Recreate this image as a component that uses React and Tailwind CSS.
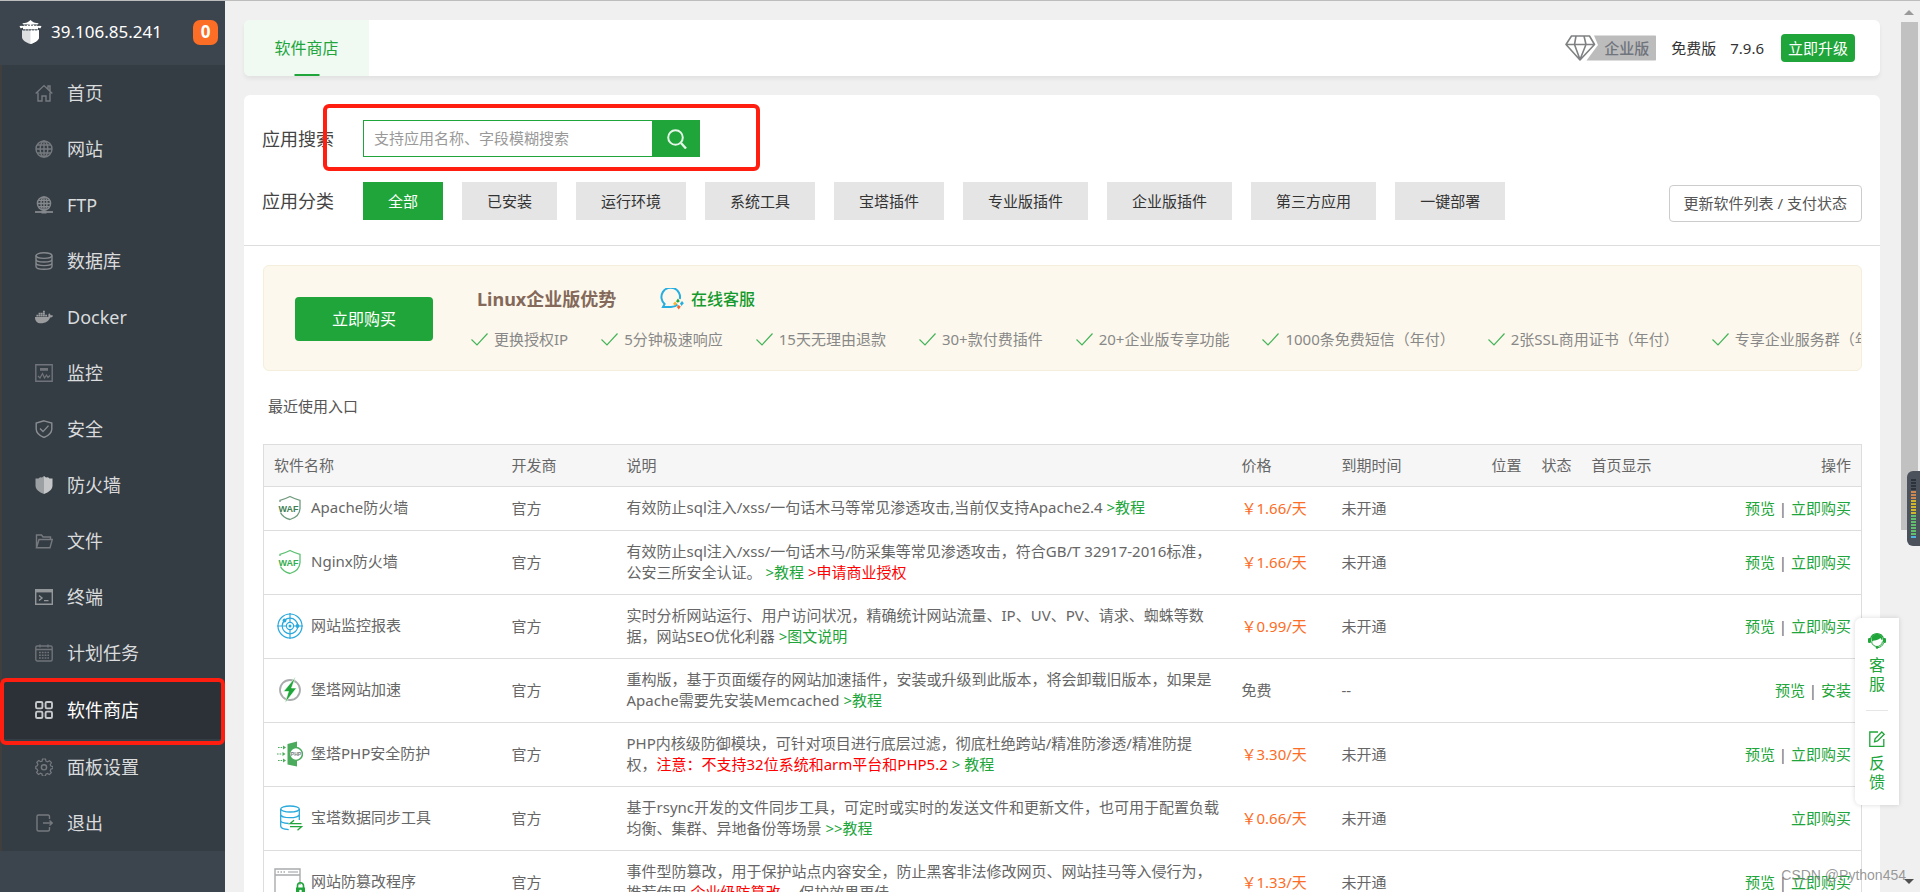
import React from "react";
import { FaDocker } from "react-icons/fa";

const NavIcon = ({ children, className = "text-[#767a7f]" }) => (
  <svg
    viewBox="0 0 18 18"
    className={`size-[18px] shrink-0 ${className}`}
    fill="none"
    stroke="currentColor"
    strokeWidth="1.4"
    aria-hidden="true"
  >
    {children}
  </svg>
);

const globe = (
  <>
    <circle cx="9" cy="9" r="8" />
    <ellipse cx="9" cy="9" rx="3.8" ry="8" />
    <path d="M9 1v16M1 9h16M2.2 5h13.6M2.2 13h13.6" />
  </>
);

const NAV = [
  {
    label: "首页",
    icon: (
      <NavIcon>
        <path d="M.7 9.4 9 1.6l8.3 7.8M3 8.4V17h4v-5h4v5h4V8.4M13 5V2h2v5" />
      </NavIcon>
    ),
  },
  { label: "网站", icon: <NavIcon>{globe}</NavIcon> },
  {
    label: "FTP",
    icon: (
      <NavIcon className="text-[#85888c]">
        <circle cx="9" cy="7.5" r="6.6" />
        <ellipse cx="9" cy="7.5" rx="3" ry="6.6" />
        <path d="M9 1v14M2.4 7.5h13.2M3.4 4.4h11.2M3.4 10.8h11.2" />
        <path d="M0 16h18" strokeWidth="1.8" />
        <path d="M6.5 16h5" strokeWidth="3" />
      </NavIcon>
    ),
  },
  {
    label: "数据库",
    icon: (
      <NavIcon className="text-[#85888c]">
        <ellipse cx="9" cy="3.6" rx="8" ry="2.8" />
        <path d="M1 3.6v10.8c0 1.6 3.6 2.8 8 2.8s8-1.2 8-2.8V3.6M1 7.2C1 8.8 4.6 10 9 10s8-1.2 8-2.8M1 10.8c0 1.6 3.6 2.8 8 2.8s8-1.2 8-2.8" />
      </NavIcon>
    ),
  },
  { label: "Docker", icon: <FaDocker className="size-[18px] shrink-0 text-[#9a9c9e]" aria-hidden="true" /> },
  {
    label: "监控",
    icon: (
      <NavIcon className="text-[#70747a]">
        <path d="M.8.8h16.4v16.4H.8z" />
        <path d="M5 4h8v2.8H5z" fill="currentColor" stroke="none" />
        <path d="m3 12 2 2 2.5-4.5 2 4.5 2-3 1.5 2.5 2-2" strokeWidth="1.2" />
      </NavIcon>
    ),
  },
  {
    label: "安全",
    icon: (
      <NavIcon className="text-[#8a8d91]">
        <path d="M9 .8 16.8 3v6c0 4-3.2 6.6-7.8 8.500C4.400 15.600 1.200 13 1.200 9V3z" />
        <path d="m5 8.600 3 3 5.500-6" />
      </NavIcon>
    ),
  },
  {
    label: "防火墙",
    icon: (
      <NavIcon className="text-[#c4c6c8]">
        <path
          d="m9 0 2 1.500 2-.3 1.500 1.300H17.500V9.500c0 4-3.500 6.500-8.500 8.500z"
          fill="currentColor"
          stroke="none"
        />
        <path d="M9 0 7 1.500l-2-.3-1.500 1.300H.5V9.500c0 4 3.500 6.500 8.500 8.500z" fill="#9da0a3" stroke="none" />
      </NavIcon>
    ),
  },
  {
    label: "文件",
    icon: (
      <NavIcon>
        <path d="M1.500 15.500V3h5l1.500 2h7.500v2.500M1.500 15.800 4 7.500h13.300L15 15.800z" />
      </NavIcon>
    ),
  },
  {
    label: "终端",
    icon: (
      <NavIcon className="text-[#94979a]">
        <path d="M.7 1.700h16.600v14.600H.7z" />
        <path d="M1 3.200h16" strokeWidth="2.400" />
        <path d="m4 7.500 3 2.500-3 2.500M9 12.600h4.500" />
      </NavIcon>
    ),
  },
  {
    label: "计划任务",
    icon: (
      <NavIcon className="text-[#707479]">
        <rect x=".8" y="2" width="16.400" height="15" rx="1.500" />
        <path d="M1 5.500h16M5 .5v3M13 .5v3" />
        <path d="M4 8.500h10M4 11.200h10M4 14h10" strokeDasharray="1.800 1" />
      </NavIcon>
    ),
  },
  {
    label: "软件商店",
    active: true,
    icon: (
      <NavIcon className="text-[#c6c8ca]">
        <g strokeWidth="1.900">
          <rect x="1" y="1" width="6.400" height="6.400" rx="1.300" />
          <rect x="10.600" y="1" width="6.400" height="6.400" rx="1.300" />
          <rect x="1" y="10.600" width="6.400" height="6.400" rx="1.300" />
          <rect x="10.600" y="10.600" width="6.400" height="6.400" rx="1.300" />
        </g>
      </NavIcon>
    ),
  },
  {
    label: "面板设置",
    icon: (
      <NavIcon>
        <path d="M7.500 1h3l.5 2.200 1.500.7 2-1.200 1.900 2-1.200 2 .7 1.400 2 .5v1.900l-2 .6-.7 1.600 1.100 2-1.900 1.900-2-1.200-1.500.7-.5 1.900h-3L7 16l-1.500-.7-2 1.200-1.900-2 1.200-1.900-.7-1.500L.800 10.500v-2l1.400-.6.700-1.600-1.100-2 1.900-1.800 2 1.200L7 3.200z" strokeWidth="1.200" />
        <circle cx="9" cy="9.300" r="2.600" />
      </NavIcon>
    ),
  },
  {
    label: "退出",
    icon: (
      <NavIcon>
        <path d="M14.500 5V2.500c0-1-.5-1.500-1.500-1.500H3.500C2.500 1 2 1.500 2 2.500v13c0 1 .5 1.500 1.500 1.500H13c1 0 1.500-.5 1.500-1.500V13M8 9h9M14.500 6.500 17.200 9l-2.700 2.500" />
      </NavIcon>
    ),
  },
];

const CATEGORIES = ["全部", "已安装", "运行环境", "系统工具", "宝塔插件", "专业版插件", "企业版插件", "第三方应用", "一键部署"];

const BENEFITS = [
  "更换授权IP",
  "5分钟极速响应",
  "15天无理由退款",
  "30+款付费插件",
  "20+企业版专享功能",
  "1000条免费短信（年付）",
  "2张SSL商用证书（年付）",
  "专享企业服务群（年付）",
];

const AppIcon = ({ children, className = "size-[26px]" }) => (
  <svg viewBox="0 0 26 26" className={className} fill="none" aria-hidden="true">
    {children}
  </svg>
);

const Waf = ({ shield, letters }) => (
  <AppIcon>
    <path
      d="M3 7V5.300C7 4.500 10 3 13 1.500c3 1.500 6 3 10 3.800v2.200M3.500 17.500c1.500 3.500 5 5.800 9.500 7 6-1.800 9.800-5.200 10-11V7"
      stroke={shield}
      strokeWidth="1.300"
    />
    <text x="11.500" y="16.500" textAnchor="middle" fontSize="9" fontWeight="700" fill={letters} fontFamily="Liberation Sans, sans-serif">
      WAF
    </text>
  </AppIcon>
);

const Link = ({ children, red }) => (
  <a href="#" className={red ? "text-[#ff0000]" : "text-[#20a53a]"}>
    {children}
  </a>
);

const APPS = [
  {
    name: "Apache防火墙",
    icon: <Waf shield="#6f9a7c" letters="#3f7f52" />,
    desc: (
      <>
        有效防止sql注入/xss/一句话木马等常见渗透攻击,当前仅支持Apache2.4 <Link>&gt;教程</Link>
      </>
    ),
    price: "￥1.66/天",
    expires: "未开通",
    actions: ["预览", "立即购买"],
  },
  {
    name: "Nginx防火墙",
    icon: <Waf shield="#5cc070" letters="#35ad4c" />,
    desc: (
      <>
        有效防止sql注入/xss/一句话木马/防采集等常见渗透攻击，符合GB/T 32917-2016标准，公安三所安全认证。 <Link>&gt;教程</Link>{" "}
        <Link red>&gt;申请商业授权</Link>
      </>
    ),
    price: "￥1.66/天",
    expires: "未开通",
    actions: ["预览", "立即购买"],
  },
  {
    name: "网站监控报表",
    icon: (
      <AppIcon>
        <g stroke="#2aa9dc" strokeWidth="1.200">
          <circle cx="13" cy="13" r="12" />
          <circle cx="13" cy="13" r="7.800" />
          <circle cx="13" cy="13" r="3.600" />
          <path d="M13 0v9.500M13 16.500V26M0 13h9.500M16.500 13H26" />
        </g>
        <circle cx="13" cy="13" r="1.500" fill="#2aa9dc" />
        <circle cx="7.500" cy="7.500" r="1.900" fill="#2aa9dc" />
        <circle cx="20.500" cy="13" r="1.900" fill="#2aa9dc" />
      </AppIcon>
    ),
    desc: (
      <>
        实时分析网站运行、用户访问状况，精确统计网站流量、IP、UV、PV、请求、蜘蛛等数据，网站SEO优化利器 <Link>&gt;图文说明</Link>
      </>
    ),
    price: "￥0.99/天",
    expires: "未开通",
    actions: ["预览", "立即购买"],
  },
  {
    name: "堡塔网站加速",
    icon: (
      <AppIcon>
        <circle cx="13" cy="13" r="10" stroke="#a9abad" strokeWidth="1.800" />
        <path d="M18.500 0 6.500 14.500h5L8 26l11.500-15h-5z" fill="#20a53a" stroke="#fff" strokeWidth=".6" />
      </AppIcon>
    ),
    desc: (
      <>
        重构版，基于页面缓存的网站加速插件，安装或升级到此版本，将会卸载旧版本，如果是Apache需要先安装Memcached <Link>&gt;教程</Link>
      </>
    ),
    price: "免费",
    free: true,
    expires: "--",
    actions: ["预览", "安装"],
  },
  {
    name: "堡塔PHP安全防护",
    icon: (
      <AppIcon>
        <path d="M10.500 3 20 .5V25.500L10.500 23.500z" fill="#4aab5c" />
        <circle cx="19" cy="13" r="6.400" fill="#fff" stroke="#4aab5c" strokeWidth="1.500" />
        <text x="19" y="15" textAnchor="middle" fontSize="5" fontWeight="700" fill="#7a7d80" fontFamily="Liberation Sans, sans-serif">
          PHP
        </text>
        <path d="M1 6.500h5M0 13h5M1 19.500h5" stroke="#4aab5c" strokeWidth="1.200" strokeDasharray="1.600 1" />
        <path d="m6 4.500 3 2-3 2zM5.500 11l3 2-3 2zM6 17.500l3 2-3 2z" fill="#4aab5c" />
      </AppIcon>
    ),
    desc: (
      <>
        PHP内核级防御模块，可针对项目进行底层过滤，彻底杜绝跨站/精准防渗透/精准防提权，
        <span className="text-[#ff0000]">注意：不支持32位系统和arm平台和PHP5.2</span> <Link>&gt; 教程</Link>
      </>
    ),
    price: "￥3.30/天",
    expires: "未开通",
    actions: ["预览", "立即购买"],
  },
  {
    name: "宝塔数据同步工具",
    icon: (
      <AppIcon>
        <g stroke="#2aa9dc" strokeWidth="1.300">
          <ellipse cx="13" cy="4" rx="9.300" ry="3" />
          <path d="M3.700 4v17c0 2 3.500 3.300 8 3.600M22.300 4v11M3.700 9.500c0 1.800 4 3.200 9.300 3.200s9.300-1.400 9.300-3.200M3.700 15.500c0 1.600 3.500 2.800 8 3" />
        </g>
        <path d="M24.500 18.700H13l4-3.500M13 21.700h11.500l-4 3.500" stroke="#20a53a" strokeWidth="1.300" />
      </AppIcon>
    ),
    desc: (
      <>
        基于rsync开发的文件同步工具，可定时或实时的发送文件和更新文件，也可用于配置负载均衡、集群、异地备份等场景 <Link>&gt;&gt;教程</Link>
      </>
    ),
    price: "￥0.66/天",
    expires: "未开通",
    actions: ["立即购买"],
  },
  {
    name: "网站防篡改程序",
    icon: (
      <svg viewBox="0 0 32 28" className="-ml-[3px] h-7 w-8" fill="none" aria-hidden="true">
        <path d="M1 27V1h25v16M1 7h25" stroke="#a9abad" strokeWidth="1.400" />
        <path d="M3.500 4h8" stroke="#a9abad" strokeWidth="1.400" strokeDasharray="1.500 1.500" />
        <path d="M14 4h10" stroke="#a9abad" strokeWidth="1.200" />
        <path d="M23.500 20v-2.200a3 3 0 0 1 6 0V20" stroke="#20a53a" strokeWidth="1.600" />
        <path d="M22 19.500h9V28h-9z" fill="#20a53a" />
        <circle cx="26.500" cy="23" r="1.300" fill="#fff" />
      </svg>
    ),
    desc: (
      <>
        事件型防篡改，用于保护站点内容安全，防止黑客非法修改网页、网站挂马等入侵行为，推荐使用 <Link red>企业级防篡改</Link> ，保护效果更佳
      </>
    ),
    price: "￥1.33/天",
    expires: "未开通",
    actions: ["预览", "立即购买"],
  },
];

function Sidebar() {
  return (
    <aside className="flex w-[225px] shrink-0 flex-col bg-[#3c444d]">
      <header className="flex h-16 items-center pb-[2px] pl-[19px] pr-[7px] text-white">
        <svg viewBox="0 0 23 24" className="h-6 w-[23px]" aria-hidden="true">
          <path d="M11.500 0c1.500 2 5 3.300 8 3.300l-.5 1.200h-15L3.500 3.300c3 0 6.500-1.300 8-3.300z" fill="#fff" />
          <path d="M.5 6c4-.2 8-1 11-2 3 1 7 1.800 11 2l-1 2.200c-1 .1-1.800-.1-2.500-.6v1.900H4V7.600c-.7.500-1.500.7-2.500.6z" fill="#fff" />
          <path d="M3 10.300h17V17c0 3.500-4 5.500-8.500 7C7 22.500 3 20.500 3 17z" fill="#dcdee0" />
          <path d="M11.500 10.300H20V17c0 3.500-4 5.500-8.500 7z" fill="#fff" />
          <path d="M3 5.300h17M4 9.900h15" stroke="#3c444d" strokeWidth=".8" strokeDasharray="2 1" />
        </svg>
        <span className="ml-[9px] text-[17px] leading-6">39.106.85.241</span>
        <span className="ml-auto flex size-[25px] items-center justify-center rounded-[7px] bg-[#fc6d26] text-[17px] font-bold leading-6">
          0
        </span>
      </header>
      <nav className="bg-[#353d44]">
        <ul>
          {NAV.map((item) => (
            <li key={item.label} className="relative">
              <a
                href="#"
                aria-current={item.active ? "page" : undefined}
                className={
                  item.active
                    ? "flex h-[58px] items-center gap-[14px] bg-[#2c3138] pl-[35px] text-lg text-white"
                    : "flex h-14 items-center gap-[14px] border-l-2 border-[#413f3e] pl-[33px] text-lg text-[#d9dbdd]"
                }
              >
                {item.icon}
                <span>{item.label}</span>
              </a>
              {item.active && (
                <span className="pointer-events-none absolute -bottom-[6px] -top-[3px] left-0 right-0 z-10 rounded-md border-4 border-[#ff1e10]" />
              )}
            </li>
          ))}
        </ul>
      </nav>
    </aside>
  );
}

function TopBar() {
  return (
    <div className="flex h-14 items-stretch rounded-md bg-white pr-[25px] shadow-[0_3px_4px_rgba(0,0,0,0.06)]">
      <button className="relative w-[125px] rounded-l-md bg-[#f0f9f2] text-base text-[#20a53a]">
        软件商店
        <span className="absolute bottom-0 left-1/2 h-0.5 w-[25px] -translate-x-1/2 bg-[#20a53a]" />
      </button>
      <div className="ml-auto flex items-center text-[15px] text-[#333]">
        <span className="relative mr-[15px] flex h-[26px] w-[91px] items-center justify-end pr-[7px] font-medium text-[#70747c]">
          <svg viewBox="0 0 91 26" className="absolute inset-0 h-[26px] w-[91px]" fill="none" aria-hidden="true">
            <path d="M29 .5H90c.6 0 1 .4 1 1V24.500c0 .6-.4 1-1 1H21.500L33 10z" fill="#bcbcbc" />
            <path d="M6.500 1h18l5 8.500L15 25 1 9.500zM1 9.500h28.500M11 1 9.500 9.500 15 24.500l6-15L19 1" stroke="#7f8183" strokeWidth="1.600" strokeLinejoin="round" />
          </svg>
          <span className="relative">企业版</span>
        </span>
        <span>免费版</span>
        <span className="ml-[14px] mr-[17px]">7.9.6</span>
        <button className="h-7 rounded bg-[#20a53a] px-[7px] text-white">立即升级</button>
      </div>
    </div>
  );
}

function Filters() {
  return (
    <div className="border-b border-[#ddd] px-[18px] pb-[23px] pt-[25px]">
      <div className="flex h-[37px] items-center">
        <label htmlFor="app-search" className="w-[101px] text-lg text-[#444]">
          应用搜索
        </label>
        <form className="relative flex h-full" onSubmit={(e) => e.preventDefault()}>
          <input
            id="app-search"
            type="text"
            placeholder="支持应用名称、字段模糊搜索"
            className="w-[290px] border border-[#20a53a] px-[10px] text-[15px] outline-none placeholder:text-[#999]"
          />
          <button aria-label="搜索" className="flex w-[47px] items-center justify-center bg-[#20a53a]">
            <svg viewBox="0 0 20 20" className="size-5" fill="none" stroke="#e4f5e7" strokeWidth="2" aria-hidden="true">
              <circle cx="8.500" cy="8.500" r="7.300" />
              <path d="m14 14 5 5.500" strokeWidth="2.400" />
            </svg>
          </button>
          <span className="pointer-events-none absolute -bottom-[14px] -left-10 -right-[60px] -top-4 rounded-md border-4 border-[#ff1e10]" />
        </form>
      </div>
      <div className="mt-[25px] flex items-start">
        <span className="w-[101px] shrink-0 text-lg leading-[38px] text-[#444]">应用分类</span>
        <div className="flex flex-wrap gap-[19px]">
          {CATEGORIES.map((c, i) => (
            <button
              key={c}
              className={
                i === 0
                  ? "h-[38px] bg-[#20a53a] px-[25px] text-[15px] text-white"
                  : "h-[38px] bg-[#e5e5e5] px-[25px] text-[15px] text-[#333]"
              }
            >
              {c}
            </button>
          ))}
        </div>
        <button className="ml-auto mt-[3px] h-[37px] shrink-0 rounded border border-[#ccc] px-[14px] text-[15px] text-[#555]">
          更新软件列表 / 支付状态
        </button>
      </div>
    </div>
  );
}

function Banner() {
  return (
    <section className="flex h-[106px] items-center overflow-hidden rounded-md border border-[#f5eedc] bg-[#fdf8ed] pl-[31px] pt-[2px]">
      <button className="h-11 w-[138px] shrink-0 rounded bg-[#20a53a] text-base text-white">立即购买</button>
      <div className="ml-[38px] shrink-0">
        <div className="flex items-center pl-[6px]">
          <h2 className="w-[183px] text-lg font-bold leading-6 text-[#84695a]">Linux企业版优势</h2>
          <a href="#" className="flex items-center gap-[7px] text-base font-medium leading-6 text-[#149a2e]">
            <svg viewBox="0 0 24 22" className="h-[22px] w-6" fill="none" aria-hidden="true">
              <path d="M17.500 16.500C16 18 13.500 19 11 19H3l1.600-3A9.300 9.300 0 1 1 19.800 11" stroke="#27aee0" strokeWidth="2" />
              <path d="m18 10.500 1.800 2.700-2 1.500-1.800-1.500z" fill="#20a53a" />
              <path d="m22 13 1.800 2.300L21.500 18 20 15.500z" fill="#27aee0" />
              <path d="m15 13.500 2 2-1.500 2-2.500-1.500z" fill="#f9b233" />
              <path d="m18.500 17 2.300 1.500-2 3-2-2.500z" fill="#f4662f" />
            </svg>
            在线客服
          </a>
        </div>
        <ul className="mt-4 flex gap-[33px] text-[15px] leading-6 text-[#888]">
          {BENEFITS.map((b) => (
            <li key={b} className="flex items-center gap-[6px] whitespace-nowrap">
              <svg viewBox="0 0 17 13" className="h-[13px] w-[17px]" fill="none" stroke="#45b45a" strokeWidth="1.200" aria-hidden="true">
                <path d="M.5 6.500 6 12 16.500.5" />
              </svg>
              {b}
            </li>
          ))}
        </ul>
      </div>
    </section>
  );
}

function AppTable() {
  return (
    <table className="w-full table-fixed border-collapse border border-[#ddd] text-left text-[15px] leading-[21px] text-[#666]">
      <colgroup>
        <col className="w-[238px]" />
        <col className="w-[115px]" />
        <col className="w-[615px]" />
        <col className="w-[100px]" />
        <col className="w-[150px]" />
        <col className="w-[50px]" />
        <col className="w-[50px]" />
        <col className="w-[100px]" />
        <col />
      </colgroup>
      <thead>
        <tr className="h-[42px] border-b border-[#ddd] bg-[#f6f6f6]">
          {["软件名称", "开发商", "说明", "价格", "到期时间", "位置", "状态", "首页显示"].map((h) => (
            <th key={h} className="px-[10px] font-normal">
              {h}
            </th>
          ))}
          <th className="px-[10px] text-right font-normal">操作</th>
        </tr>
      </thead>
      <tbody>
        {APPS.map((app, i) => (
          <tr key={app.name} className={i === 0 ? "h-11 border-b border-[#ddd]" : "h-16 border-b border-[#ddd]"}>
            <td className="px-[10px] pb-[2px]">
              <div className="flex items-center">
                <span className="flex w-[37px] shrink-0 items-center pl-[3px]">{app.icon}</span>
                <span>{app.name}</span>
              </div>
            </td>
            <td className="px-[10px]">官方</td>
            <td className="px-[10px] pb-[2px]">{app.desc}</td>
            <td className={app.free ? "px-[10px]" : "whitespace-nowrap px-[10px] text-[#fc6d26]"}>{app.price}</td>
            <td className="px-[10px]">{app.expires}</td>
            <td />
            <td />
            <td />
            <td className="px-[10px] text-right">
              {app.actions.map((a, n) => (
                <React.Fragment key={a}>
                  {n > 0 && " | "}
                  <Link>{a}</Link>
                </React.Fragment>
              ))}
            </td>
          </tr>
        ))}
      </tbody>
    </table>
  );
}

function SupportDock() {
  return (
    <div className="absolute right-[21px] top-[617px] flex w-11 flex-col items-center rounded-l-md bg-white text-base leading-[19px] text-[#20a53a] shadow-[0_0_5px_rgba(0,0,0,0.15)]">
      <button className="flex flex-col items-center pb-4 pt-[14px]">
        <svg viewBox="0 0 18 17" className="h-[17px] w-[18px]" fill="none" aria-hidden="true">
          <path d="M2.500 7a6.600 6.600 0 0 1 13 0" stroke="#20a53a" strokeWidth="1.300" />
          <path d="M3.500 8.500C3 3.500 6 2 9 2s6 1.500 5.500 6.500C13.500 8 13 7 12.500 6c-2 2-5.500 2.500-7 2.500-.5 1-1.200 1.500-2 0z" fill="#20a53a" />
          <rect x="0" y="6" width="3" height="5" rx="1.300" fill="#20a53a" />
          <rect x="15" y="6" width="3" height="5" rx="1.300" fill="#20a53a" />
          <path d="M3.500 9.500c.5 3.500 3 5 5.500 5s5-1.500 5.500-5M15.500 11c-.8 2.800-3 4.500-6 4.700" stroke="#20a53a" strokeWidth="1" />
          <circle cx="9" cy="15.500" r="1.300" fill="#20a53a" />
        </svg>
        <span className="mt-[7px] w-4">客服</span>
      </button>
      <span className="h-px w-[22px] bg-[#e6e6e6]" />
      <button className="flex flex-col items-center pb-[13px] pt-[20px]">
        <svg viewBox="0 0 16 16" className="size-4" fill="none" stroke="#20a53a" strokeWidth="1.300" aria-hidden="true">
          <path d="M9 1H.8v14.300h14V8" />
          <path d="m5.500 10.800.6-3L12.800 1l2.400 2.300L8.500 10z" />
        </svg>
        <span className="mt-[7px] w-4">反馈</span>
      </button>
    </div>
  );
}

function ScrollRail() {
  return (
    <div className="relative flex w-5 shrink-0 flex-col items-center bg-[#f0f0f0] pr-[2px]">
      <svg viewBox="0 0 10 5" className="mt-[9px] h-[5px] w-[10px]" aria-hidden="true">
        <path d="M0 5 5 0l5 5z" fill="#9a9a9a" />
      </svg>
      <span className="mt-[7px] h-[57%] w-[17px] bg-[#c1c1c1]" />
      <svg viewBox="0 0 10 5" className="mb-2 mt-auto h-[5px] w-[10px]" aria-hidden="true">
        <path d="m0 0 5 5 5-5z" fill="#505050" />
      </svg>
      <span className="absolute right-0 top-[470px] flex h-[75px] w-[13px] flex-col items-center justify-center gap-px rounded-l-md bg-[#4c525b]">
        {Array.from({ length: 20 }, (_, i) => (
          <span
            key={i}
            className={
              i < 4
                ? "h-[2px] w-[5px] bg-[#2d333b]"
                : i < 7
                  ? "h-[2px] w-[5px] bg-[#d0874f]"
                  : i < 12
                    ? "h-[2px] w-[5px] bg-[#cdb62c]"
                    : i < 19
                      ? "h-[2px] w-[5px] bg-[#5fbf6d]"
                      : "h-[2px] w-[5px] bg-[#4fb3e0]"
            }
          />
        ))}
      </span>
    </div>
  );
}

export default function App() {
  return (
    <div
      lang="zh-CN"
      className="relative flex h-screen overflow-hidden border-t border-[#bdbdbd] bg-[#f0f0f0] font-['Noto_Sans','Noto_Sans_CJK_SC',sans-serif]"
    >
      <Sidebar />
      <main className="min-w-0 flex-1 overflow-hidden pl-[19px] pr-5 pt-[19px]">
        <TopBar />
        <div className="mt-[19px] rounded-md bg-white">
          <Filters />
          <div className="pb-6 pl-[19px] pr-[18px] pt-[19px]">
            <Banner />
            <p className="mb-[27px] ml-[5px] mt-[25px] text-[15px] leading-[21px] text-[#555]">最近使用入口</p>
            <AppTable />
          </div>
        </div>
      </main>
      <ScrollRail />
      <SupportDock />
      <span className="pointer-events-none absolute bottom-2 right-[14px] font-['Liberation_Sans',sans-serif] text-sm leading-[18px] text-[#808080]/80">
        CSDN @Python454
      </span>
    </div>
  );
}
